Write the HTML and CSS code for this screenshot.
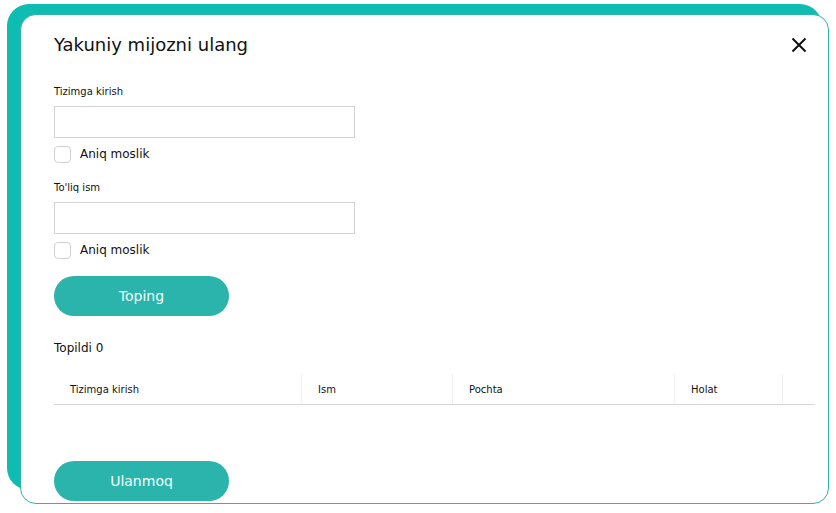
FILE: index.html
```html
<!DOCTYPE html>
<html lang="uz">
<head>
  <meta charset="UTF-8">
  <meta name="viewport" content="width=device-width, initial-scale=1.0">
  <title>Yakuniy mijozni ulang</title>
  <link rel="stylesheet" href="styles.css">
</head>
<body>

  <div class="backdrop">
    <div class="modal">
      <div class="modal-header">
        <h2>Yakuniy mijozni ulang</h2>
        <button class="close" type="button" aria-label="Yopish">
          <svg width="16" height="16" viewBox="0 0 16 16">
            <path d="M1.5 1.5 L14.5 14.5 M14.5 1.5 L1.5 14.5" stroke="#111" stroke-width="2" fill="none"/>
          </svg>
        </button>
      </div>

      <form class="search-form">
        <label for="login">Tizimga kirish</label>
        <input type="text" id="login">
        <label class="check"><input type="checkbox"><span class="box"></span>Aniq moslik</label>

        <label for="fullname">To'liq ism</label>
        <input type="text" id="fullname">
        <label class="check"><input type="checkbox"><span class="box"></span>Aniq moslik</label>

        <button type="button" class="btn">Toping</button>
      </form>

      <p class="found">Topildi 0</p>

      <table class="results">
        <thead>
          <tr>
            <th class="col-login">Tizimga kirish</th>
            <th class="col-name">Ism</th>
            <th class="col-mail">Pochta</th>
            <th class="col-state">Holat</th>
            <th class="col-extra"></th>
          </tr>
        </thead>
        <tbody></tbody>
      </table>

      <button type="button" class="btn connect">Ulanmoq</button>
    </div>
  </div>

</body>
</html>
```

FILE: styles.css
```css
body {
  font-family: "DejaVu Sans", Verdana, sans-serif;
  background-color: #fff;
  color: #111;
  margin: 0;
  padding: 4px 0 0 7px;
  height: 509px;
}

.backdrop {
  background-color: #0fbcb1;
  width: 802px;
  height: 476px;
  padding: 10px 0 0 13px;
  border-radius: 22px;
}

.modal {
  background-color: #fff;
  border: 1px solid #2bb5ab;
  border-radius: 16px;
  width: 762px;
  height: 470px;
  padding: 18px 12px 0 33px;
}

.modal-header {
  display: flex;
  justify-content: space-between;
  align-items: center;
  padding-right: 9px;
}

.modal-header h2 {
  margin: 0;
  font-size: 18px;
  font-weight: normal;
  line-height: 24px;
}

.close {
  background: none;
  border: none;
  padding: 0;
  width: 16px;
  height: 16px;
  cursor: pointer;
}

.close svg {
  display: block;
}

.search-form {
  display: flex;
  flex-direction: column;
  align-items: flex-start;
  margin-top: 28px;
}

.search-form > label {
  font-size: 10px;
  line-height: 13px;
  margin-bottom: 8px;
}

.search-form input[type="text"] {
  box-sizing: border-box;
  width: 301px;
  height: 32px;
  border: 1px solid #d4d4d4;
  margin: 0;
  padding: 0 8px;
}

.search-form .check {
  display: flex;
  align-items: center;
  gap: 9px;
  font-size: 12px;
  line-height: 17px;
  margin: 8px 0 18px;
}

.check input {
  display: none;
}

.check .box {
  box-sizing: border-box;
  width: 17px;
  height: 17px;
  border: 1px solid #d0d0d0;
  border-radius: 4px;
}

.search-form .check:last-of-type {
  margin-bottom: 17px;
}

.btn {
  width: 175px;
  height: 40px;
  border: none;
  border-radius: 20px;
  background-color: #2bb4ab;
  color: #f2fffd;
  font-family: inherit;
  font-size: 14px;
  cursor: pointer;
}

.found {
  margin: 24px 0 0;
  font-size: 12px;
  line-height: 16px;
}

.results {
  width: 761px;
  margin-top: 18px;
  border-collapse: collapse;
  table-layout: fixed;
}

.results th {
  height: 30px;
  padding: 0 0 0 16px;
  font-size: 10px;
  font-weight: normal;
  text-align: left;
  border-bottom: 1px solid #d6d6d6;
  border-left: 1px solid #f0f0f0;
}

.results th.col-login {
  border-left: none;
  width: 231px;
}

.col-name { width: 134px; }
.col-mail { width: 205px; }
.col-state { width: 91px; }

.connect {
  margin-top: 56px;
}
```
